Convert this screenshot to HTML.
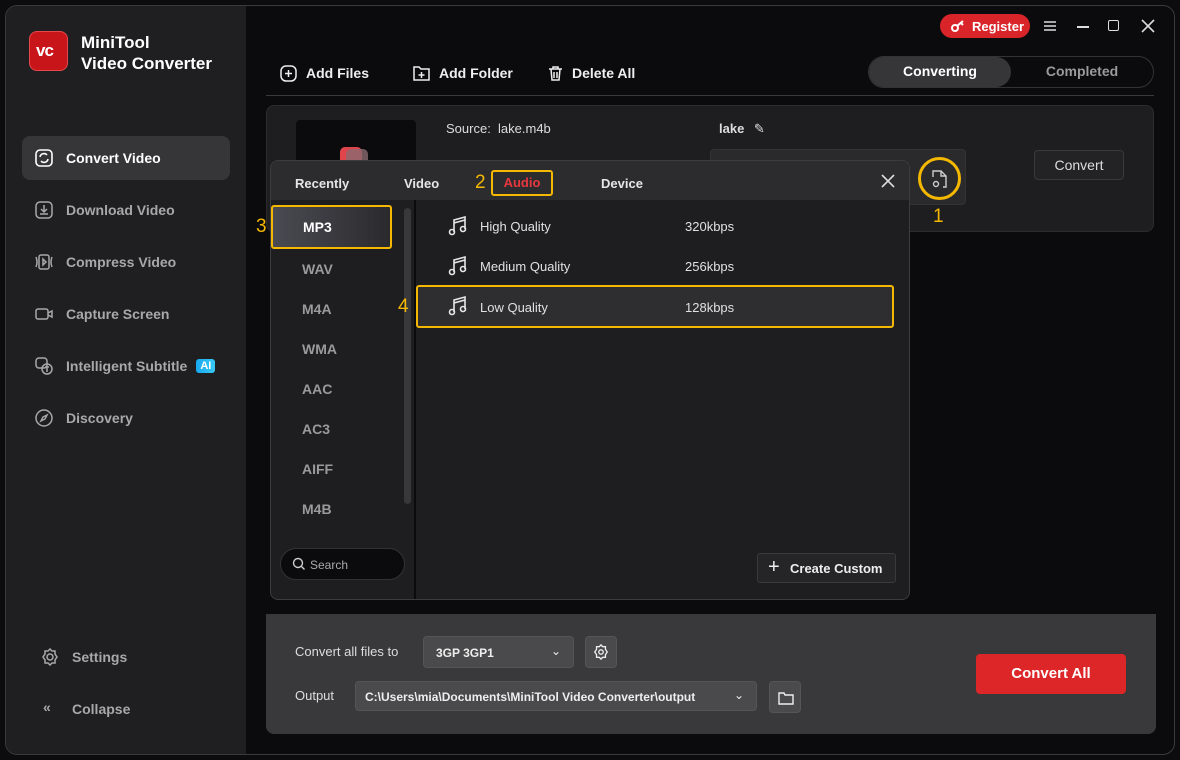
<!DOCTYPE html><html><head><meta charset="utf-8"><style>
*{box-sizing:border-box;margin:0;padding:0}
body{width:1180px;height:760px;background:#0c0c0e;font-family:"Liberation Sans",sans-serif;color:#e6e6e6;position:relative;overflow:hidden;font-size:13px}
.abs{position:absolute}
.win{left:5px;top:5px;width:1170px;height:750px;border:1px solid #3a3a3c;border-radius:12px;background:#0b0b0d;overflow:hidden}
.side{left:6px;top:6px;width:240px;height:748px;background:#1f1f21;border-radius:11px 0 0 11px}
.nav{left:22px;width:208px;height:44px;display:flex;align-items:center;padding-left:44px;font-size:14px;color:#a8a8aa;font-weight:bold}
.nav svg{position:absolute;left:13px;top:13px}
.b{font-weight:bold}
.y{border:2px solid #f5b800;border-radius:3px}
.yn{color:#f5b800;font-size:19px}
.fmt{left:302px;font-size:14px;font-weight:bold;color:#9a9a9c}
.row{left:416px;width:478px;height:40px}
.row span{position:absolute;top:12px;font-size:13px;color:#e0e0e0}
.tb{font-size:14px;color:#eee;font-weight:bold;top:65px}
.tb svg{position:absolute;left:0;top:0}
</style></head><body>
<div class="abs win"></div>
<div class="abs side"></div>
<!-- logo -->
<div class="abs" style="left:29px;top:31px;width:39px;height:40px;border-radius:8px;background:#c8151a;border:1px solid #e5484c"><span style="position:absolute;left:6px;top:9px;font:bold 17px 'Liberation Sans';color:#fff;letter-spacing:-1px">vc</span></div>
<div class="abs b" style="left:81px;top:32px;font-size:17px;line-height:21px;color:#fff">MiniTool<br>Video Converter</div>
<div class="abs nav" style="top:136px;background:#363638;border-radius:8px;color:#fff"><svg width="18" height="18" viewBox="0 0 18 18" fill="none" stroke="#fff" stroke-width="1.6"><rect x="1" y="1" width="16" height="16" rx="4"/><path d="M5 8a4 4 0 0 1 7-2M13 10a4 4 0 0 1-7 2"/></svg>Convert Video</div>
<div class="abs nav" style="top:188px"><svg width="18" height="18" viewBox="0 0 18 18" fill="none" stroke="#a8a8aa" stroke-width="1.5"><rect x="1" y="1" width="16" height="16" rx="4"/><path d="M9 4v7M6 8l3 3 3-3M5 13h8"/></svg>Download Video</div>
<div class="abs nav" style="top:240px"><svg width="18" height="18" viewBox="0 0 18 18" fill="none" stroke="#a8a8aa" stroke-width="1.5"><rect x="4" y="2" width="10" height="14" rx="2"/><path d="M8 6l3 3-3 3zM1 4q2 5 0 10M17 4q-2 5 0 10"/></svg>Compress Video</div>
<div class="abs nav" style="top:292px"><svg width="18" height="18" viewBox="0 0 18 18" fill="none" stroke="#a8a8aa" stroke-width="1.5"><rect x="1" y="4" width="12" height="10" rx="2"/><path d="M13 8l4-2v6l-4-2"/></svg>Capture Screen</div>
<div class="abs nav" style="top:344px"><svg width="18" height="18" viewBox="0 0 18 18" fill="none" stroke="#a8a8aa" stroke-width="1.5"><rect x="1" y="1" width="11" height="10" rx="3"/><circle cx="12" cy="12" r="5"/><path d="M10 10h4M12 10v5"/></svg>Intelligent Subtitle<span style="margin-left:9px;background:linear-gradient(90deg,#18a8f0,#37c9f5);color:#fff;font-size:11px;padding:1px 4px;border-radius:3px">AI</span></div>
<div class="abs nav" style="top:396px"><svg width="18" height="18" viewBox="0 0 18 18" fill="none" stroke="#a8a8aa" stroke-width="1.5"><circle cx="9" cy="9" r="8"/><path d="M12 6l-2 4-4 2 2-4z"/></svg>Discovery</div>
<div class="abs nav" style="top:635px;left:28px"><svg width="18" height="18" viewBox="0 0 18 18" fill="none" stroke="#a8a8aa" stroke-width="1.5"><circle cx="9" cy="9" r="3"/><path d="M9 1l2 2 3 0 0 3 2 3-2 3 0 3-3 0-2 2-2-2-3 0 0-3-2-3 2-3 0-3 3 0z"/></svg>Settings</div>
<div class="abs nav" style="top:687px;left:28px"><span style="position:absolute;left:15px;top:12px;font-size:14px">«</span>Collapse</div>

<!-- top bar -->
<div class="abs" style="left:940px;top:14px;width:90px;height:24px;border-radius:12px;background:#d9252a;color:#fff;font-size:13px;font-weight:bold;padding:5px 0 0 32px">Register<svg width="16" height="14" viewBox="0 0 16 14" style="position:absolute;left:11px;top:5px" fill="none" stroke="#fff" stroke-width="2"><circle cx="4" cy="9" r="3"/><path d="M6 7l6-5M10 4l2 2"/></svg></div>
<svg class="abs" style="left:1044px;top:20px" width="12" height="12" viewBox="0 0 12 12" stroke="#ddd" stroke-width="1.6"><path d="M0 2h12M0 6h12M0 10h12"/></svg>
<div class="abs" style="left:1077px;top:26px;width:12px;height:2px;background:#ddd"></div>
<div class="abs" style="left:1108px;top:20px;width:11px;height:11px;border:1.5px solid #ddd;border-radius:2px"></div>
<svg class="abs" style="left:1141px;top:19px" width="14" height="14" viewBox="0 0 14 14" stroke="#ddd" stroke-width="1.6"><path d="M1 1l12 12M13 1L1 13"/></svg>
<div class="abs tb" style="left:280px;padding-left:26px"><svg width="17" height="17" viewBox="0 0 17 17" fill="none" stroke="#eee" stroke-width="1.5"><rect x="1" y="1" width="15" height="15" rx="5"/><path d="M8.5 5v7M5 8.5h7"/></svg>Add Files</div>
<div class="abs tb" style="left:413px;padding-left:26px"><svg width="17" height="17" viewBox="0 0 17 17" fill="none" stroke="#eee" stroke-width="1.5"><path d="M1 2h5l2 2h8v11H1z"/><path d="M8.5 7v6M5.5 10h6"/></svg>Add Folder</div>
<div class="abs tb" style="left:548px;padding-left:24px"><svg width="15" height="17" viewBox="0 0 15 17" fill="none" stroke="#eee" stroke-width="1.5"><path d="M1 4h13M5 4V2h5v2M3 4l1 11h7l1-11M6 7v6M9 7v6"/></svg>Delete All</div>
<div class="abs" style="left:868px;top:56px;width:286px;height:32px;border:1px solid #333;border-radius:16px;background:#0b0b0d"></div>
<div class="abs b" style="left:869px;top:57px;width:142px;height:30px;border-radius:15px;background:#363638;color:#fff;font-size:14px;text-align:center;line-height:29px">Converting</div>
<div class="abs b" style="left:1011px;top:57px;width:142px;height:30px;color:#9a9a9c;font-size:14px;text-align:center;line-height:29px">Completed</div>
<div class="abs" style="left:266px;top:95px;width:888px;height:1px;background:#3a3a3c"></div>

<!-- card -->
<div class="abs" style="left:266px;top:105px;width:888px;height:127px;background:#1e1e20;border-radius:8px;border:1px solid #2c2c2e"></div>
<div class="abs" style="left:296px;top:120px;width:120px;height:80px;background:#0b0b0d;border-radius:4px"><div class="abs" style="left:44px;top:27px;width:22px;height:22px;background:#e0454c;border-radius:5px"></div><div class="abs" style="left:50px;top:29px;width:22px;height:22px;background:#8a6a70;border-radius:5px;opacity:.8"></div></div>
<div class="abs" style="left:446px;top:121px;color:#ddd">Source:&nbsp; lake.m4b</div>
<div class="abs b" style="left:719px;top:121px;color:#ddd">lake <span style="font-weight:normal;margin-left:6px">✎</span></div>
<div class="abs" style="left:710px;top:149px;width:256px;height:56px;background:#2a2a2c;border-radius:4px;border:1px solid #333"></div>
<div class="abs" style="left:1034px;top:150px;width:90px;height:30px;background:#232325;border:1px solid #3a3a3c;border-radius:4px;text-align:center;line-height:29px;font-size:14px;color:#ddd">Convert</div>
<div class="abs" style="left:918px;top:157px;width:43px;height:43px;border:3px solid #f5b800;border-radius:50%"><svg width="22" height="22" viewBox="0 0 22 22" style="position:absolute;left:8px;top:8px" fill="none" stroke="#ccc" stroke-width="1.4"><path d="M4 9V3h8l5 5v11h-3M12 3v5h5"/><circle cx="7" cy="16" r="2.5"/></svg></div>
<div class="abs yn" style="left:933px;top:206px">1</div>

<!-- popup -->
<div class="abs" style="left:270px;top:160px;width:640px;height:440px;background:#1e1e20;border:1px solid #3c3c3e;border-radius:8px;overflow:hidden">
 <div class="abs" style="left:0;top:0;width:640px;height:39px;background:#2c2c2e"></div>
 <div class="abs" style="left:143px;top:39px;width:2px;height:400px;background:#0b0b0d"></div>
 <div class="abs" style="left:133px;top:47px;width:7px;height:296px;background:#38383a;border-radius:4px"></div>
</div>
<div class="abs b" style="left:295px;top:176px;font-size:13px;color:#e6e6e6">Recently</div>
<div class="abs b" style="left:404px;top:176px;font-size:13px;color:#e6e6e6">Video</div>
<div class="abs yn" style="left:475px;top:172px">2</div>
<div class="abs y b" style="left:491px;top:170px;width:62px;height:26px;color:#e8383e;font-size:13px;text-align:center;line-height:22px">Audio</div>
<div class="abs b" style="left:601px;top:176px;font-size:13px;color:#e6e6e6">Device</div>
<svg class="abs" style="left:881px;top:174px" width="14" height="14" viewBox="0 0 14 14" stroke="#ddd" stroke-width="1.6"><path d="M1 1l12 12M13 1L1 13"/></svg>
<div class="abs yn" style="left:256px;top:216px">3</div>
<div class="abs y b" style="left:271px;top:205px;width:121px;height:44px;background:linear-gradient(90deg,#4a4a52,#2a2a2e);color:#fff;font-size:14px;padding:12px 0 0 30px">MP3</div>
<div class="abs fmt" style="top:261px">WAV</div>
<div class="abs fmt" style="top:301px">M4A</div>
<div class="abs fmt" style="top:341px">WMA</div>
<div class="abs fmt" style="top:381px">AAC</div>
<div class="abs fmt" style="top:421px">AC3</div>
<div class="abs fmt" style="top:461px">AIFF</div>
<div class="abs fmt" style="top:501px">M4B</div>
<div class="abs" style="left:280px;top:548px;width:125px;height:32px;border-radius:16px;background:#0b0b0d;border:1px solid #333;color:#aaa;font-size:12px;padding:9px 0 0 29px">Search<svg width="14" height="14" viewBox="0 0 14 14" style="position:absolute;left:11px;top:8px" fill="none" stroke="#ccc" stroke-width="1.4"><circle cx="6" cy="6" r="4.5"/><path d="M9.5 9.5l3 3"/></svg></div>
<div class="abs row" style="top:207px"><span style="left:64px">High Quality</span><span style="left:269px">320kbps</span></div>
<div class="abs row" style="top:247px"><span style="left:64px">Medium Quality</span><span style="left:269px">256kbps</span></div>
<div class="abs yn" style="left:398px;top:296px">4</div>
<div class="abs row y" style="top:285px;height:43px;background:#2e2e30"><span style="left:62px;top:13px">Low Quality</span><span style="left:267px;top:13px">128kbps</span></div>
<svg class="abs" style="left:448px;top:216px" width="20" height="100" viewBox="0 0 20 100" fill="none" stroke="#e6e6e6" stroke-width="1.6">
<g><path d="M6 16V4l11-3v12M6 7l11-3"/><circle cx="4" cy="16" r="2.5"/><circle cx="15" cy="13" r="2.5"/></g>
<g transform="translate(0,40)"><path d="M6 16V4l11-3v12M6 7l11-3"/><circle cx="4" cy="16" r="2.5"/><circle cx="15" cy="13" r="2.5"/></g>
<g transform="translate(0,80)"><path d="M6 16V4l11-3v12M6 7l11-3"/><circle cx="4" cy="16" r="2.5"/><circle cx="15" cy="13" r="2.5"/></g>
</svg>
<div class="abs" style="left:757px;top:553px;width:139px;height:30px;background:#252527;border:1px solid #3a3a3c;border-radius:3px;color:#eee;font-size:13px;font-weight:bold;padding:7px 0 0 32px"><span style="position:absolute;left:10px;top:2px;font-size:20px;font-weight:normal">+</span>Create Custom</div>

<!-- bottom panel -->
<div class="abs" style="left:266px;top:614px;width:890px;height:120px;background:#39393b;border-radius:0 0 8px 8px"></div>
<div class="abs" style="left:295px;top:644px;color:#ddd">Convert all files to</div>
<div class="abs" style="left:423px;top:636px;width:151px;height:32px;background:#4a4a4c;border:1px solid #555;border-radius:4px;font-size:12px;font-weight:bold;color:#eee;padding:9px 0 0 12px">3GP 3GP1<span style="position:absolute;right:12px;top:7px;font-weight:normal">⌄</span></div>
<div class="abs" style="left:585px;top:636px;width:32px;height:32px;background:#4a4a4c;border:1px solid #555;border-radius:4px"><svg width="16" height="16" viewBox="0 0 18 18" style="position:absolute;left:7px;top:7px" fill="none" stroke="#eee" stroke-width="1.5"><circle cx="9" cy="9" r="2.5"/><path d="M9 1l2 2 3 0 0 3 2 3-2 3 0 3-3 0-2 2-2-2-3 0 0-3-2-3 2-3 0-3 3 0z"/></svg></div>
<div class="abs" style="left:295px;top:688px;color:#ddd">Output</div>
<div class="abs" style="left:355px;top:681px;width:402px;height:30px;background:#4a4a4c;border:1px solid #555;border-radius:4px;font-size:12px;font-weight:bold;color:#eee;padding:8px 0 0 9px">C:\Users\mia\Documents\MiniTool Video Converter\output<span style="position:absolute;right:12px;top:6px;font-weight:normal">⌄</span></div>
<div class="abs" style="left:769px;top:681px;width:32px;height:32px;background:#4a4a4c;border:1px solid #555;border-radius:4px"><svg width="16" height="14" viewBox="0 0 16 14" style="position:absolute;left:8px;top:9px" fill="none" stroke="#eee" stroke-width="1.4"><path d="M1 2h5l1 2h8v9H1z"/></svg></div>
<div class="abs b" style="left:976px;top:654px;width:150px;height:40px;background:#dc2627;border-radius:4px;color:#fff;font-size:15px;text-align:center;line-height:40px">Convert All</div>
</body></html>
